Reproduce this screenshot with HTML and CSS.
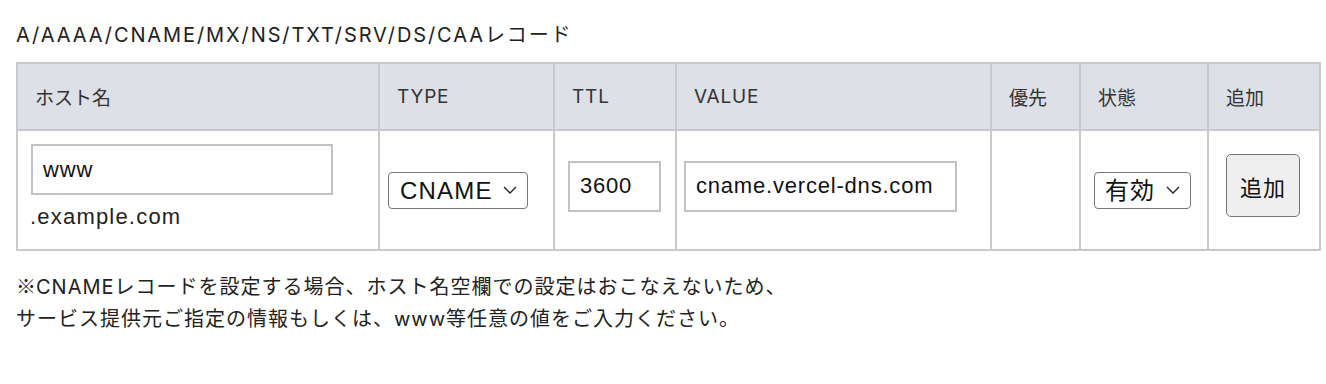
FILE: index.html
```html
<!DOCTYPE html>
<html lang="ja">
<head>
    <meta charset="UTF-8">
    <title>DNSレコード設定</title>
    <link rel="stylesheet" href="styles.css">
</head>
<body>

<div class="records">
    <h3 class="caption">A/AAAA/CNAME/MX/NS/TXT/SRV/DS/CAAレコード</h3>

    <table class="record-table">
        <thead>
            <tr>
                <th class="col-host">ホスト名</th>
                <th class="col-type latin">TYPE</th>
                <th class="col-ttl latin">TTL</th>
                <th class="col-value latin">VALUE</th>
                <th class="col-prio">優先</th>
                <th class="col-state">状態</th>
                <th class="col-add">追加</th>
            </tr>
        </thead>
        <tbody>
            <tr>
                <td>
                    <input type="text" class="in-host" value="www">
                    <div class="domain">.example.com</div>
                </td>
                <td>
                    <select class="sel sel-type">
                        <option>CNAME</option>
                        <option>A</option>
                        <option>AAAA</option>
                        <option>MX</option>
                        <option>TXT</option>
                    </select>
                </td>
                <td><input type="text" class="in-ttl" value="3600"></td>
                <td><input type="text" class="in-value" value="cname.vercel-dns.com"></td>
                <td></td>
                <td>
                    <select class="sel sel-state">
                        <option>有効</option>
                        <option>無効</option>
                    </select>
                </td>
                <td><button class="btn-add">追加</button></td>
            </tr>
        </tbody>
    </table>

    <p class="note">
        <span class="mark">※</span>CNAMEレコードを設定する場合、ホスト名空欄での設定はおこなえないため、<br>
        サービス提供元ご指定の情報もしくは、www等任意の値をご入力ください。
    </p>
</div>

</body>
</html>
```

FILE: styles.css
```css
body {
    margin: 0;
    background: #fff;
    color: #222;
    font-family: Inter, "Noto Sans CJK JP", sans-serif;
}
.records {
    padding: 0 7px 0 16px;
}
.caption {
    margin: 0;
    padding-top: 22px;
    height: 62px;
    box-sizing: border-box;
    font-size: 20px;
    line-height: 26px;
    letter-spacing: 1.9px;
    font-weight: normal;
    color: #222;
}
.record-table {
    width: 1303px;
    border-collapse: collapse;
    table-layout: fixed;
}
.record-table th,
.record-table td {
    box-sizing: border-box;
    border: 2px solid #c8c9cc;
    text-align: left;
    padding: 0;
}
.record-table th {
    background: #dde0e6;
    height: 67px;
    padding-left: 17px;
    font-size: 19px;
    font-weight: normal;
    color: #333;
}
.record-table th.latin {
    letter-spacing: 0.8px;
}
.record-table td {
    height: 120px;
    vertical-align: middle;
}
.col-host { width: 362px; }
.col-type { width: 175px; }
.col-ttl { width: 122px; }
.col-value { width: 315px; }
.col-prio { width: 89px; }
.col-state { width: 128px; }
.col-add { width: 112px; }

input, select, button {
    display: block;
    font-family: "Liberation Sans", "Noto Sans CJK JP", sans-serif;
    color: #111;
}
input {
    box-sizing: border-box;
    height: 51px;
    border: 2px solid #c2c2c2;
    padding: 0 10px;
    font-size: 22px;
    letter-spacing: 0.8px;
    outline: none;
}
.in-host {
    width: 302px;
    margin: -5px 0 8px 13px;
}
.domain {
    margin-left: 12px;
    font-family: "Liberation Sans", sans-serif;
    font-size: 22px;
    letter-spacing: 1.2px;
    line-height: 28px;
    color: #222;
}
.in-ttl {
    width: 93px;
    margin: -8px 0 0 13px;
}
.in-value {
    width: 273px;
    margin: -8px 0 0 7px;
}
.sel {
    box-sizing: border-box;
    height: 37px;
    border: 1px solid #767676;
    border-radius: 4px;
    background: #fff url("data:image/svg+xml;utf8,<svg xmlns='http://www.w3.org/2000/svg' width='14' height='8' viewBox='0 0 14 8'><path d='M1 1l6 6 6-6' fill='none' stroke='%23222' stroke-width='1.3'/></svg>") no-repeat right 10px center;
    -webkit-appearance: none;
    appearance: none;
    font-size: 24px;
    letter-spacing: 1.2px;
    padding: 0 30px 0 11px;
}
.sel-type {
    width: 140px;
    margin-left: 8px;
}
.sel-state {
    width: 97px;
    margin-left: 13px;
    padding-left: 10px;
    letter-spacing: 1px;
}
.btn-add {
    width: 74px;
    height: 63px;
    margin: -9px 0 0 17px;
    background: #efefef;
    border: 1px solid #767676;
    border-radius: 5px;
    font-size: 22px;
    letter-spacing: 1px;
    padding: 0;
}
.note {
    margin: 19px 0 0;
    font-size: 20px;
    line-height: 32px;
    letter-spacing: 1px;
    color: #222;
}
.note .mark {
    font-family: "Noto Sans CJK JP", sans-serif;
    letter-spacing: 0;
}
```
